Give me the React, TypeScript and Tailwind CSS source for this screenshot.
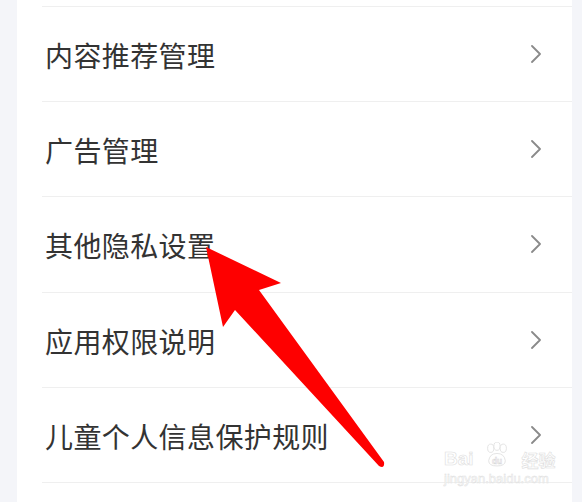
const items = ['内容推荐管理', '广告管理', '其他隐私设置', '应用权限说明', '儿童个人信息保护规则']

function Chevron() {
  return (
    <svg width="12" height="18" viewBox="0 0 12 18" fill="none">
      <polyline points="2,1 10,9 2,17" stroke="#8a8a8a" strokeWidth="1.8" strokeLinecap="round" strokeLinejoin="round" />
    </svg>
  )
}

function Watermark() {
  return (
    <div className="absolute left-[444px] top-[442px] flex flex-col items-start select-none pointer-events-none">
      <div className="flex items-end leading-none">
        <span className="text-[19px] font-bold text-white [-webkit-text-stroke:0.6px_#dedede]" style={{ fontFamily: '"Liberation Sans", sans-serif' }}>Bai</span>
        <svg width="26" height="25" viewBox="0 0 22 24" className="ml-[10px] mb-[1px]">
          <g fill="white" stroke="#dedede" strokeWidth="0.8">
            <ellipse cx="5" cy="6" rx="3" ry="4" />
            <ellipse cx="11" cy="4" rx="3" ry="4" />
            <ellipse cx="17" cy="6" rx="3" ry="4" />
            <path d="M3 18 Q4 11 11 11 Q18 11 19 18 Q19 23 11 23 Q3 23 3 18 Z" />
          </g>
          <text x="11" y="21" fontSize="8" textAnchor="middle" fill="white" stroke="#d6d6d6" strokeWidth="0.5" fontFamily="Liberation Sans, sans-serif" fontWeight="bold">du</text>
        </svg>
        <span className="ml-[12px] text-[17px] font-bold text-white [-webkit-text-stroke:0.6px_#dedede]" style={{ fontFamily: '"Noto Sans CJK SC", sans-serif' }}>经验</span>
      </div>
      <span className="text-[13px] leading-none mt-[4px] text-white [-webkit-text-stroke:0.5px_#e0e0e0]" style={{ fontFamily: '"Liberation Sans", sans-serif' }}>jingyan.baidu.com</span>
    </div>
  )
}

export default function App() {
  return (
    <div className="relative w-[582px] h-[502px] overflow-hidden bg-[#f4f5f9] pl-[17px] pr-[10px] flex" style={{ fontFamily: '"Noto Sans CJK SC", "Noto Sans", sans-serif' }}>
      <div className="flex-1 bg-white flex flex-col">
        <div className="ml-[25px] h-[7px] border-b border-[#efefef] shrink-0" />
        {items.map((t) => (
          <div key={t} className="ml-[25px] h-[95.2px] shrink-0 border-b border-[#efefef] flex items-center justify-between pl-[3px] pr-[30px]">
            <span className="text-[28px] text-[#333333] tracking-[0.4px] translate-y-[1px]">{t}</span>
            <Chevron />
          </div>
        ))}
      </div>
      <svg className="absolute left-0 top-0 pointer-events-none" width="582" height="502" viewBox="0 0 582 502">
        <path d="M206 247 L281 283 L259 290 L384 462 Q385 469 379 466 L235 310 L223 327 Z" fill="#fe0000" />
      </svg>
      <Watermark />
    </div>
  )
}
